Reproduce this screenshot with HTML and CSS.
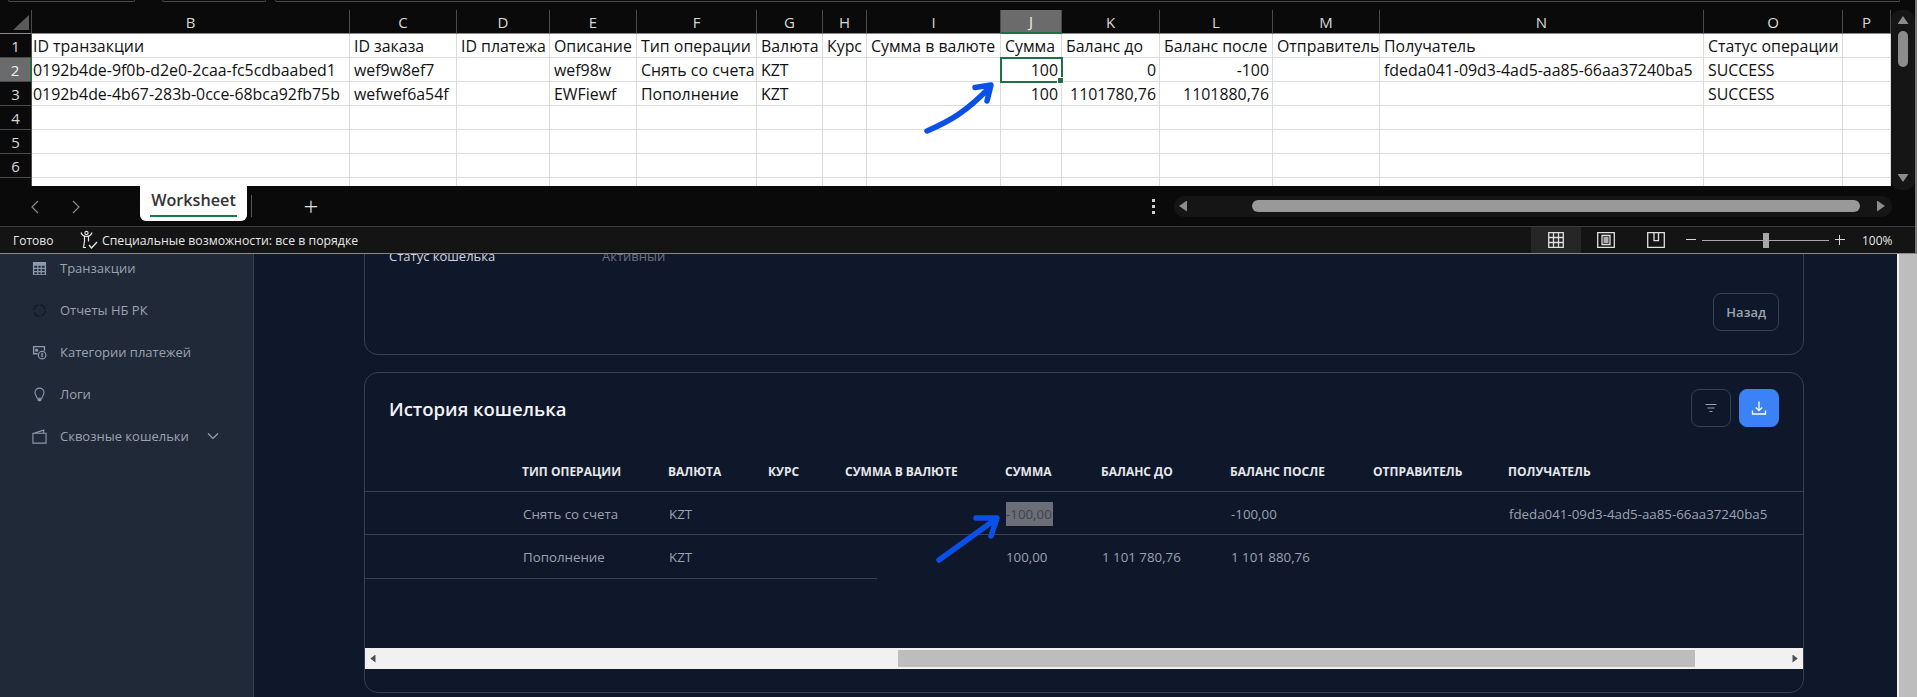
FILE: index.html
```html
<!DOCTYPE html>
<html lang="ru">

<head>
    <meta charset="UTF-8">
    <meta name="viewport" content="width=device-width, initial-scale=1.0">
    <title>История кошелька</title>
    <link rel="stylesheet" href="styles.css">
</head>

<body>

    <div class="page">
        <aside class="sidebar">
            <a class="nav-item">
                <svg class="nav-icon" viewBox="0 0 16 16"><path fill="currentColor" d="M1 1h14v14H1zM2.500 5v2.300h3V5zm4.300 0v2.300h2.400V5zm3.700 0v2.300h3V5zm-8 3.500v2.200h3V8.500zm4.300 0v2.200h2.400V8.500zm3.700 0v2.200h3V8.500zm-8 3.400V14h3v-2.100zm4.300 0V14h2.400v-2.100zm3.700 0V14h3v-2.100z"/></svg>
                Транзакции
            </a>
            <a class="nav-item">
                <svg class="nav-icon" viewBox="0 0 16 16"><circle cx="8" cy="8" r="6" fill="none" stroke="#111827" stroke-width="1.300" stroke-dasharray="7 2.500"/></svg>
                Отчеты НБ РК
            </a>
            <a class="nav-item">
                <svg class="nav-icon" viewBox="0 0 16 16"><path fill="currentColor" d="M1 1h13v5h-1.500V2.500h-10v6H6V10H1z"/><circle cx="5" cy="5.500" r="1.700" fill="currentColor"/><circle cx="10.800" cy="10.800" r="4" fill="none" stroke="currentColor" stroke-width="1.300"/><path d="M10.800 8.500v4.600M9.500 9.700h2.400M9.500 11.900h2.400" stroke="currentColor" fill="none"/></svg>
                Категории платежей
            </a>
            <a class="nav-item">
                <svg class="nav-icon" viewBox="0 0 16 16"><path fill="none" stroke="currentColor" stroke-width="1.200" d="M8 1.200a4.800 4.800 0 0 0-4.800 4.800c0 2.400 1.800 3.600 2.300 6h5c.5-2.400 2.300-3.600 2.300-6A4.800 4.800 0 0 0 8 1.200z"/><path fill="currentColor" d="M5.800 12.500h4.400V14l-1.200 1.300H7L5.800 14z"/></svg>
                Логи
            </a>
            <a class="nav-item">
                <svg class="nav-icon" viewBox="0 0 16 16"><path fill="none" stroke="currentColor" stroke-width="1.200" d="M1 4.500h14V15H1zM2 4.500 12.500 1.200V4.500"/></svg>
                Сквозные кошельки
                <svg class="nav-chevron" viewBox="0 0 12 8"><path fill="none" stroke="currentColor" stroke-width="1.200" d="M1 1.500l5 5 5-5"/></svg>
            </a>
        </aside>

        <main class="content">
            <section class="card card-info">
                <div class="info-row">
                    <span class="info-label">Статус кошелька</span>
                    <span class="info-value">Активный</span>
                </div>
                <div class="card-actions">
                    <button class="btn" type="button">Назад</button>
                </div>
            </section>

            <section class="card card-history">
                <div class="history-head">
                    <h2>История кошелька</h2>
                    <div class="history-tools">
                        <button class="btn btn-icon" type="button">
                            <svg viewBox="0 0 16 16" width="16" height="16"><path fill="none" stroke="#9ca3af" stroke-width="1.200" d="M2.500 4.500h11M4.500 8h7M6.500 11.500h3"/></svg>
                        </button>
                        <button class="btn btn-icon btn-primary" type="button">
                            <svg viewBox="0 0 16 16" width="16" height="16"><path fill="none" stroke="#fff" stroke-width="1.300" d="M8 1.500v9M4.800 7.500 8 10.700l3.200-3.200M1.500 10.500v3.500h13v-3.500"/></svg>
                        </button>
                    </div>
                </div>

                <div class="history-scroll">
                    <table class="history-table">
                        <colgroup>
                            <col class="h-c0"><col class="h-c1"><col class="h-c2"><col class="h-c3"><col class="h-c4"><col class="h-c5"><col class="h-c6"><col class="h-c7"><col class="h-c8"><col class="h-c9">
                        </colgroup>
                        <thead>
                            <tr>
                                <th></th>
                                <th>Тип операции</th>
                                <th>Валюта</th>
                                <th>Курс</th>
                                <th>Сумма в валюте</th>
                                <th>Сумма</th>
                                <th>Баланс до</th>
                                <th>Баланс после</th>
                                <th>Отправитель</th>
                                <th>Получатель</th>
                            </tr>
                        </thead>
                        <tbody>
                            <tr class="row-full">
                                <td></td>
                                <td>Снять со счета</td>
                                <td>KZT</td>
                                <td></td>
                                <td></td>
                                <td><span class="selected-text">-100,00</span></td>
                                <td></td>
                                <td>-100,00</td>
                                <td></td>
                                <td>fdeda041-09d3-4ad5-aa85-66aa37240ba5</td>
                            </tr>
                            <tr>
                                <td></td>
                                <td>Пополнение</td>
                                <td>KZT</td>
                                <td></td>
                                <td></td>
                                <td>100,00</td>
                                <td>1 101 780,76</td>
                                <td>1 101 880,76</td>
                                <td></td>
                                <td></td>
                            </tr>
                        </tbody>
                    </table>
                    <div class="row-end"></div>
                </div>

                <div class="h-scrollbar">
                    <span class="h-arrow h-arrow-left"></span>
                    <div class="h-track"><span class="h-thumb"></span></div>
                    <span class="h-arrow h-arrow-right"></span>
                </div>
            </section>
        </main>

        <div class="page-scrollbar"></div>
    </div>

    <!-- excel window lies over the page -->
    <div class="excel">
        <div class="excel-top">
            <span class="top-box top-box-1"></span>
            <span class="top-box top-box-2"></span>
            <span class="top-box top-box-3"></span>
        </div>

        <div class="sheet-area">
            <div class="sheet-clip">
                <table class="sheet">
                    <colgroup>
                        <col class="c-a"><col class="c-b"><col class="c-c"><col class="c-d"><col class="c-e"><col class="c-f"><col class="c-g"><col class="c-h"><col class="c-i"><col class="c-j"><col class="c-k"><col class="c-l"><col class="c-m"><col class="c-n"><col class="c-o"><col class="c-p">
                    </colgroup>
                    <thead>
                        <tr>
                            <th class="corner"><span class="corner-mark"></span></th>
                            <th>B</th><th>C</th><th>D</th><th>E</th><th>F</th><th>G</th><th>H</th><th>I</th><th class="col-active">J</th><th>K</th><th>L</th><th>M</th><th>N</th><th>O</th><th>P</th>
                        </tr>
                    </thead>
                    <tbody>
                        <tr>
                            <th>1</th>
                            <td>ID транзакции</td><td>ID заказа</td><td>ID платежа</td><td>Описание</td><td>Тип операции</td><td>Валюта</td><td>Курс</td><td>Сумма в валюте</td><td>Сумма</td><td>Баланс до</td><td>Баланс после</td><td>Отправитель</td><td>Получатель</td><td>Статус операции</td><td></td>
                        </tr>
                        <tr>
                            <th class="row-active">2</th>
                            <td>0192b4de-9f0b-d2e0-2caa-fc5cdbaabed1</td><td>wef9w8ef7</td><td></td><td>wef98w</td><td>Снять со счета</td><td>KZT</td><td></td><td></td><td class="num cell-active">100</td><td class="num">0</td><td class="num">-100</td><td></td><td>fdeda041-09d3-4ad5-aa85-66aa37240ba5</td><td>SUCCESS</td><td></td>
                        </tr>
                        <tr>
                            <th>3</th>
                            <td>0192b4de-4b67-283b-0cce-68bca92fb75b</td><td>wefwef6a54f</td><td></td><td>EWFiewf</td><td>Пополнение</td><td>KZT</td><td></td><td></td><td class="num">100</td><td class="num">1101780,76</td><td class="num">1101880,76</td><td></td><td></td><td>SUCCESS</td><td></td>
                        </tr>
                        <tr><th>4</th><td></td><td></td><td></td><td></td><td></td><td></td><td></td><td></td><td></td><td></td><td></td><td></td><td></td><td></td><td></td></tr>
                        <tr><th>5</th><td></td><td></td><td></td><td></td><td></td><td></td><td></td><td></td><td></td><td></td><td></td><td></td><td></td><td></td><td></td></tr>
                        <tr><th>6</th><td></td><td></td><td></td><td></td><td></td><td></td><td></td><td></td><td></td><td></td><td></td><td></td><td></td><td></td><td></td></tr>
                        <tr><th></th><td></td><td></td><td></td><td></td><td></td><td></td><td></td><td></td><td></td><td></td><td></td><td></td><td></td><td></td><td></td></tr>
                    </tbody>
                </table>
            </div>
            <div class="v-scrollbar">
                <span class="v-arrow v-arrow-up"></span>
                <span class="v-thumb"></span>
                <span class="v-arrow v-arrow-down"></span>
            </div>
        </div>

        <div class="tabbar">
            <svg class="tab-nav tab-prev" viewBox="0 0 8 14"><path fill="none" stroke="#8a8a8a" stroke-width="1.200" d="M7 1 1 7l6 6"/></svg>
            <svg class="tab-nav tab-next" viewBox="0 0 8 14"><path fill="none" stroke="#8a8a8a" stroke-width="1.200" d="M1 1l6 6-6 6"/></svg>
            <div class="tab">
                <span class="tab-label">Worksheet</span>
            </div>
            <span class="tab-divider"></span>
            <span class="tab-add">+</span>
            <span class="tab-more"><i></i><i></i><i></i></span>
            <div class="tab-scroll">
                <span class="ts-arrow ts-left"></span>
                <span class="ts-thumb"></span>
                <span class="ts-arrow ts-right"></span>
            </div>
        </div>

        <div class="statusbar">
            <span class="status-ready">Готово</span>
            <svg class="status-a11y" viewBox="0 0 18 20"><path fill="none" stroke="#e6e6e6" stroke-width="1.200" d="M1 2.500c1 3 3 4 5.500 4s4.500-1 5.500-4M4.500 6.500v4.500L3.500 17.500h2.500M8.500 6.500v5"/><circle cx="6.500" cy="3" r="1.600" fill="none" stroke="#e6e6e6" stroke-width="1.100"/><path fill="none" stroke="#e6e6e6" stroke-width="1.300" d="M9 15l2.500 3 5.500-6"/></svg>
            <span class="status-text">Специальные возможности: все в порядке</span>
            <div class="status-views">
                <span class="view-btn view-btn-active">
                    <svg viewBox="0 0 16 16" width="16" height="16"><path fill="none" stroke="#e0e0e0" stroke-width="1.300" d="M.7.700h14.600v14.600H.7zM5.500.700v14.600M10.500.700v14.600M.7 5.500h14.600M.7 10.500h14.600"/></svg>
                </span>
                <span class="view-btn">
                    <svg viewBox="0 0 18 16" width="18" height="16"><path fill="none" stroke="#e0e0e0" stroke-width="1.300" d="M.7.700h16.600v14.600H.7zM5 3.500h8v9H5zM6.500 6h5M6.500 8h5M6.500 10h5"/></svg>
                </span>
                <span class="view-btn">
                    <svg viewBox="0 0 18 16" width="18" height="16"><path fill="none" stroke="#e0e0e0" stroke-width="1.300" d="M.7.700h16.600v14.600H.7zM7 .700v8h4.500V.700"/></svg>
                </span>
            </div>
            <div class="zoom-box">
                <span class="zoom-sign zoom-minus"></span>
                <span class="zoom-line"><span class="zoom-thumb"></span></span>
                <span class="zoom-sign zoom-plus"></span>
                <span class="zoom-value">100%</span>
            </div>
        </div>
    </div>

    <!-- hand drawn arrows on top of the screenshot -->
    <svg class="marks" viewBox="0 0 1917 697">
        <path d="M927 131C950 121 966 112 990 87M975 87.500 991 85 987 101" />
        <path d="M939 560 996 519M976 518 997 518 991 536" />
    </svg>

</body>

</html>
```

FILE: styles.css
```css
* {
    box-sizing: border-box;
}

html,
body {
    margin: 0;
    height: 100%;
    overflow: hidden;
}

body {
    font-family: "Open Sans", "Noto Sans", sans-serif;
    background-color: #0f172a;
    color: #9ca3af;
    position: relative;
}

/* page behind the excel window */

.page {
    display: flex;
    height: 697px;
}

.sidebar {
    flex: 0 0 254px;
    padding: 247px 0 0 32px;
    background-color: #1f2937;
    border-right: 1px solid #374151;
}

.nav-item {
    display: flex;
    align-items: center;
    height: 42px;
    font-size: 13px;
    color: #9ca3af;
}

.nav-icon {
    width: 15px;
    height: 15px;
    margin-right: 13px;
    color: #8d99ae;
}

.nav-chevron {
    width: 12px;
    height: 8px;
    margin-left: 18px;
}

.content {
    flex: 1;
    padding: 199px 93px 0 110px;
}

.card {
    border: 1px solid #374151;
    border-radius: 14px;
}

.card-info {
    height: 156px;
    padding: 46px 24px 0;
}

.info-row {
    display: flex;
    height: 20px;
    align-items: center;
    font-size: 13px;
}

.info-label {
    width: 213px;
    color: #d1d5db;
}

.info-value {
    color: #6b7280;
}

.card-actions {
    display: flex;
    justify-content: flex-end;
    margin-top: 27px;
}

.btn {
    height: 38px;
    padding: 0 12px;
    background: none;
    border: 1px solid #374151;
    border-radius: 8px;
    font-family: inherit;
    font-size: 13px;
    font-weight: 600;
    color: #9ca3af;
}

.card-history {
    height: 321px;
    margin-top: 17px;
    padding-top: 16px;
}

.history-head {
    display: flex;
    justify-content: space-between;
    align-items: center;
    padding: 0 24px;
}

.history-head h2 {
    margin: 0;
    font-size: 18.500px;
    font-weight: 600;
    color: #f3f4f6;
}

.history-tools {
    display: flex;
    gap: 8px;
}

.btn-icon {
    display: flex;
    align-items: center;
    justify-content: center;
    width: 40px;
    padding: 0;
}

.btn-primary {
    background-color: #3b82f6;
    border-color: #3b82f6;
}

.history-scroll {
    height: 196px;
    margin-top: 25px;
    overflow: hidden;
}

.history-table {
    width: 1438px;
    table-layout: fixed;
    border-collapse: separate;
    border-spacing: 0;
}

.h-c0 { width: 157px; }
.h-c1 { width: 146px; }
.h-c2 { width: 100px; }
.h-c3 { width: 77px; }
.h-c4 { width: 160px; }
.h-c5 { width: 96px; }
.h-c6 { width: 129px; }
.h-c7 { width: 143px; }
.h-c8 { width: 135px; }
.h-c9 { width: 295px; }

.history-table th {
    height: 40px;
    padding: 0;
    text-align: left;
    font-size: 12px;
    font-weight: 700;
    text-transform: uppercase;
    color: #e5e7eb;
    border-bottom: 1px solid #374151;
    white-space: nowrap;
}

.history-table td {
    height: 43px;
    padding: 0 0 0 1px;
    font-size: 13.300px;
    white-space: nowrap;
}

.history-table .row-full td {
    padding-top: 1px;
    border-bottom: 1px solid #374151;
}

.selected-text {
    display: inline-block;
    width: 47px;
    line-height: 24px;
    background-color: #6b6e76;
    color: #3f434d;
}

.row-end {
    width: 512px;
    height: 1px;
    background-color: #374151;
}

.h-scrollbar {
    display: flex;
    align-items: center;
    height: 21px;
    background-color: #f1f1f1;
}

.h-arrow {
    flex: 0 0 21px;
    height: 8px;
    clip-path: polygon(50% 0, 50% 100%, 25% 50%);
    background-color: #505050;
}

.h-arrow-right {
    clip-path: polygon(50% 0, 50% 100%, 75% 50%);
}

.h-track {
    flex: 1;
    padding-left: 512px;
}

.h-thumb {
    display: block;
    width: 797px;
    height: 17px;
    background-color: #bdbdbd;
}

.page-scrollbar {
    flex: 0 0 20px;
    background-color: #bdbdbd;
    border-left: 2px solid #f1f1f1;
}

/* excel window */

.excel {
    position: absolute;
    top: 0;
    left: 0;
    width: 1917px;
    height: 254px;
    display: flex;
    flex-direction: column;
    background-color: #0a0a0a;
    border-right: 2px solid #777;
    border-bottom: 1px solid #8a8a8a;
    font-family: "Open Sans", "Noto Sans", sans-serif;
}

.excel-top {
    display: flex;
    height: 10px;
    padding-left: 8px;
}

.top-box {
    height: 2px;
    border: 1px solid #4a4a4a;
    border-top: 0;
    border-radius: 0 0 4px 4px;
}

.top-box-1 { width: 127px; }
.top-box-2 { width: 104px; margin-left: 27px; }
.top-box-3 { width: 1625px; margin-left: 9px; }

.sheet-area {
    display: flex;
    height: 176px;
}

.sheet-clip {
    width: 1891px;
    overflow: hidden;
}

.sheet {
    width: 1891px;
    table-layout: fixed;
    border-collapse: separate;
    border-spacing: 0;
    font-size: 15.900px;
}

.c-a { width: 32px; }
.c-b { width: 318px; }
.c-c { width: 107px; }
.c-d { width: 93px; }
.c-e { width: 87px; }
.c-f { width: 120px; }
.c-g { width: 66px; }
.c-h { width: 44px; }
.c-i { width: 134px; }
.c-j { width: 61px; }
.c-k { width: 98px; }
.c-l { width: 113px; }
.c-m { width: 107px; }
.c-n { width: 324px; }
.c-o { width: 139px; }
.c-p { width: 48px; }

.sheet th {
    height: 24px;
    padding: 0;
    font-size: 15px;
    line-height: 20px;
    font-weight: 400;
    color: #d8d8d8;
    background-color: #0a0a0a;
    border-right: 1px solid #4a4a4a;
    border-bottom: 1px solid #4a4a4a;
}

.sheet thead th {
    border-bottom-color: #8a8a8a;
    position: relative;
}

.corner-mark {
    position: absolute;
    left: 13px;
    top: 5px;
    width: 16px;
    height: 15px;
    background-color: #5a5a5a;
    clip-path: polygon(100% 0, 100% 100%, 0 100%);
}

.sheet th.col-active {
    background-color: #6b6b6b;
    color: #f0f0f0;
    border-bottom: 2px solid #1f7145;
}

.sheet th.row-active {
    background-color: #6b6b6b;
    color: #f0f0f0;
    border-right: 2px solid #1f7145;
}

.sheet td {
    height: 24px;
    padding: 0 3px 0 4px;
    line-height: 20px;
    background-color: #fff;
    color: #111;
    border-right: 1px solid #dcdcdc;
    border-bottom: 1px solid #dcdcdc;
    white-space: nowrap;
    overflow: hidden;
}

.sheet td:nth-child(2) {
    padding-left: 1px;
}

.sheet td.num {
    text-align: right;
}

.sheet td.cell-active {
    position: relative;
    overflow: visible;
    outline: 2px solid #1f7145;
    outline-offset: -1px;
}

.cell-active::after {
    content: "";
    position: absolute;
    right: -3px;
    bottom: -3px;
    width: 5px;
    height: 5px;
    background-color: #1f7145;
    border: 1px solid #fff;
}

.v-scrollbar {
    display: flex;
    flex-direction: column;
    align-items: center;
    flex: 0 0 24px;
    height: 180px;
    background-color: #151515;
    border-radius: 10px;
}

.v-arrow {
    flex: none;
    width: 11px;
    height: 8px;
    background-color: #8c8c8c;
}

.v-arrow-up {
    margin-top: 6px;
    clip-path: polygon(50% 0, 100% 100%, 0 100%);
}

.v-arrow-down {
    margin-top: auto;
    margin-bottom: 8px;
    clip-path: polygon(0 0, 100% 0, 50% 100%);
}

.v-thumb {
    flex: none;
    width: 10px;
    height: 36px;
    margin-top: 7px;
    background-color: #8c8c8c;
    border-radius: 5px;
}

.tabbar {
    display: flex;
    align-items: center;
    height: 40px;
    flex: none;
    position: relative;
}

.tab-nav {
    flex: none;
    width: 8px;
    height: 14px;
    margin-top: 1px;
}

.tab-prev { margin-left: 31px; }
.tab-next { margin-left: 33px; }

.tab {
    align-self: flex-start;
    width: 107px;
    height: 35px;
    margin-left: 60px;
    padding: 0 10px;
    background-color: #fff;
    border-radius: 0 0 6px 6px;
}

.tab-label {
    display: block;
    height: 31px;
    padding-top: 3px;
    font-size: 16.200px;
    font-weight: 600;
    text-align: center;
    color: #333;
    border-bottom: 2px solid #107c41;
}

.tab-divider {
    flex: none;
    width: 1px;
    height: 22px;
    margin-left: 4px;
    background-color: #555;
}

.tab-add {
    flex: none;
    width: 20px;
    margin-left: 49px;
    font-size: 26px;
    font-weight: 300;
    line-height: 24px;
    text-align: center;
    color: #e0e0e0;
}

.tab-more {
    display: flex;
    flex-direction: column;
    gap: 3px;
    flex: none;
    margin-left: 831px;
    margin-top: 1px;
}

.tab-more i {
    display: block;
    width: 3px;
    height: 3px;
    background-color: #d0d0d0;
}

.tab-scroll {
    display: flex;
    align-items: center;
    flex: none;
    width: 718px;
    height: 21px;
    margin-left: 19px;
    background-color: #151515;
    border-radius: 10px;
}

.ts-arrow {
    flex: none;
    width: 8px;
    height: 11px;
    background-color: #8c8c8c;
}

.ts-left {
    margin-left: 5px;
    clip-path: polygon(100% 0, 100% 100%, 0 50%);
}

.ts-right {
    margin-left: 17px;
    clip-path: polygon(0 0, 100% 50%, 0 100%);
}

.ts-thumb {
    flex: none;
    width: 608px;
    height: 12px;
    margin-left: 65px;
    background-color: #999;
    border-radius: 6px;
}

.statusbar {
    display: flex;
    align-items: center;
    flex: 1;
    background-color: #141414;
    border-top: 1px solid #3b3b3b;
    font-size: 12px;
    color: #e6e6e6;
}

.status-ready {
    flex: none;
    width: 67px;
    padding-left: 13px;
}

.status-a11y {
    flex: none;
    width: 18px;
    height: 20px;
    margin: 0 4px 0 13px;
}

.status-text {
    flex: none;
    width: 1429px;
    font-size: 12.300px;
}

.status-views {
    display: flex;
    align-self: stretch;
    flex: none;
}

.view-btn {
    display: flex;
    align-items: center;
    justify-content: center;
    width: 50px;
}

.view-btn-active {
    background-color: #262626;
}

.zoom-box {
    display: flex;
    align-items: center;
    flex: none;
    margin-left: 5px;
}

.zoom-sign {
    position: relative;
    flex: none;
    width: 10px;
    height: 10px;
}

.zoom-sign::before {
    content: "";
    position: absolute;
    left: 0;
    top: 4px;
    width: 10px;
    height: 1px;
    background-color: #d8d8d8;
}

.zoom-plus::after {
    content: "";
    position: absolute;
    left: 4px;
    top: 0;
    width: 1px;
    height: 10px;
    background-color: #d8d8d8;
}

.zoom-line {
    display: flex;
    align-items: center;
    flex: none;
    width: 127px;
    height: 1px;
    margin: 0 6px;
    padding-left: 61px;
    background-color: #a8a8a8;
}

.zoom-thumb {
    width: 6px;
    height: 15px;
    background-color: #a8a8a8;
}

.zoom-value {
    flex: none;
    margin-left: 17px;
}

/* annotation arrows */

.marks {
    position: absolute;
    top: 0;
    left: 0;
    width: 1917px;
    height: 697px;
    pointer-events: none;
}

.marks path {
    fill: none;
    stroke: #0a50e6;
    stroke-width: 5.500;
    stroke-linecap: round;
    stroke-linejoin: round;
}
```
